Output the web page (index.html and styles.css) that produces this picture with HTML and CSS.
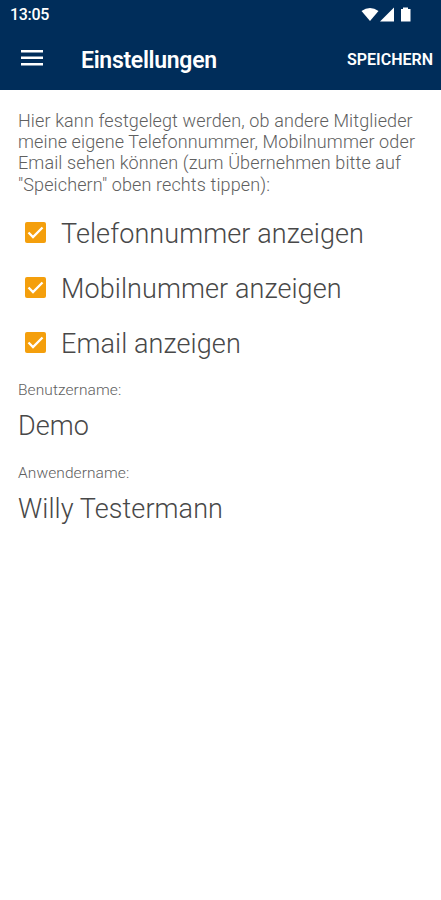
FILE: index.html
```html
<!DOCTYPE html>
<html lang="de">
<head>
    <meta charset="UTF-8">
    <meta name="viewport" content="width=device-width, initial-scale=1.0">
    <title>Einstellungen</title>
    <link rel="stylesheet" href="styles.css">
</head>
<body>
    <header class="header">
        <div class="status-bar">
            <span class="clock">13:05</span>
            <svg class="status-icons" width="52" height="16" viewBox="0 0 52 16" fill="#fff">
                <path d="M0.500 4Q9 -2 17.500 4L9 14Z"/>
                <path d="M33 0.500v14H19z"/>
                <path d="M42 0.500h5v1.500h2.500v12.500h-9.500v-12.500h2z"/>
            </svg>
        </div>
        <div class="toolbar">
            <button class="menu-button" aria-label="Menü">
                <svg width="22" height="16" viewBox="0 0 22 16" fill="#fff">
                    <path d="M0 0h22v2.500H0zM0 6.500h22v2.500H0zM0 13h22v2.500H0z"/>
                </svg>
            </button>
            <h1>Einstellungen</h1>
            <button class="save-button">SPEICHERN</button>
        </div>
    </header>
    <main class="container">
        <p class="info">Hier kann festgelegt werden, ob andere Mitglieder<br>meine eigene Telefonnummer, Mobilnummer oder<br>Email sehen können (zum Übernehmen bitte auf<br>"Speichern" oben rechts tippen):</p>
        <div class="options">
            <label class="option">
                <input type="checkbox" checked>
                <svg class="check" width="21" height="21" viewBox="0 0 21 21"><rect width="21" height="21" rx="2" fill="#f49f0c"/><path d="M3.500 10.500l4.500 4.500L17.500 5.500" fill="none" stroke="#fff" stroke-width="2.300"/></svg>
                <span>Telefonnummer anzeigen</span>
            </label>
            <label class="option">
                <input type="checkbox" checked>
                <svg class="check" width="21" height="21" viewBox="0 0 21 21"><rect width="21" height="21" rx="2" fill="#f49f0c"/><path d="M3.500 10.500l4.500 4.500L17.500 5.500" fill="none" stroke="#fff" stroke-width="2.300"/></svg>
                <span>Mobilnummer anzeigen</span>
            </label>
            <label class="option">
                <input type="checkbox" checked>
                <svg class="check" width="21" height="21" viewBox="0 0 21 21"><rect width="21" height="21" rx="2" fill="#f49f0c"/><path d="M3.500 10.500l4.500 4.500L17.500 5.500" fill="none" stroke="#fff" stroke-width="2.300"/></svg>
                <span>Email anzeigen</span>
            </label>
        </div>
        <div class="field">
            <div class="field-label">Benutzername:</div>
            <div class="field-value">Demo</div>
        </div>
        <div class="field">
            <div class="field-label">Anwendername:</div>
            <div class="field-value">Willy Testermann</div>
        </div>
    </main>
</body>
</html>
```
FILE: styles.css
```css
body {
    font-family: Roboto, sans-serif;
    font-weight: 300;
    letter-spacing: 0.09px;
    background: #fff;
    color: #484848;
    margin: 0;
    min-height: 100vh;
}
.header {
    background: #002d5a;
    color: #fff;
    height: 90px;
}
.status-bar {
    display: flex;
    justify-content: space-between;
    align-items: center;
    height: 29px;
    padding: 0 28px 0 10px;
}
.clock {
    font-size: 16px;
    font-weight: 500;
    letter-spacing: -0.3px;
}
.toolbar {
    display: flex;
    align-items: center;
    height: 61px;
    padding: 0 8px 0 21px;
}
button {
    background: none;
    border: none;
    padding: 0;
    color: #fff;
    font-family: Roboto, sans-serif;
    cursor: pointer;
}
.menu-button {
    display: flex;
    width: 60px;
    margin-top: -3px;
}
h1 {
    flex: 1;
    margin: 2px 0 0;
    font-size: 23px;
    font-weight: 600;
    letter-spacing: -0.3px;
}
.save-button {
    font-size: 16px;
    font-weight: 600;
}
.container {
    padding: 20px 18px;
}
.info {
    margin: 0;
    color: #606060;
    font-size: 18px;
    letter-spacing: 0.12px;
    line-height: 21.200px;
    white-space: nowrap;
}
.options {
    margin: 11px 0 9px;
}
.option {
    display: flex;
    align-items: center;
    height: 55px;
    padding-left: 7px;
    font-size: 27px;
}
.option input {
    display: none;
}
.check {
    margin-right: 15px;
    margin-top: -2px;
}
.option span {
    padding-top: 1px;
}
.field {
    height: 83px;
}
.field-label {
    color: #606060;
    font-size: 15.500px;
    line-height: 20px;
}
.field-value {
    padding-top: 10px;
    font-size: 27px;
    line-height: 32px;
}
```
